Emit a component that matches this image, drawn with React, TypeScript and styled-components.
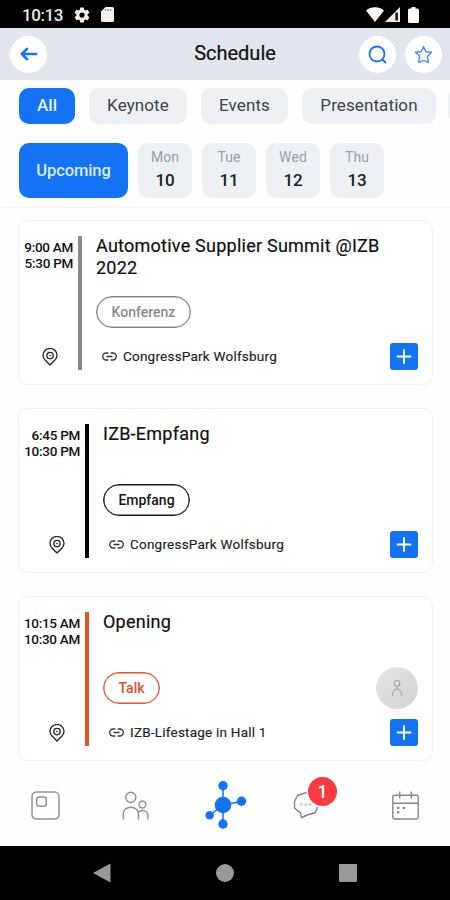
import React from "react";
import styled, { createGlobalStyle } from "styled-components";

const GlobalStyle = createGlobalStyle`
  * { box-sizing: border-box; }
  body { margin: 0; background: #fff; font-family: Roboto, "Liberation Sans", sans-serif; color: #111; }
  svg { display: block; flex: none; }
`;

const BLUE = "#1473f5";

const Screen = styled.div`
  width: 450px;
  height: 900px;
  display: flex;
  flex-direction: column;
  overflow: hidden;
  background: #fefefe;
`;

const StatusBar = styled.div`
  height: 28px;
  flex: none;
  background: #000;
  color: #e8e8e8;
  display: flex;
  align-items: center;
  padding: 1px 31px 0 22px;
`;

const Clock = styled.span`
  font-size: 17px;
  font-weight: 500;
  width: 51px;
  letter-spacing: -0.45px;
  white-space: nowrap;
`;

const StatusGroup = styled.div<{ $end?: boolean; $gap: number }>`
  display: flex;
  align-items: center;
  gap: ${(p) => p.$gap}px;
  margin-left: ${(p) => (p.$end ? "auto" : "0")};
`;

const BatterySlot = styled.div`
  margin-left: 7px;
`;

const Header = styled.header`
  height: 52px;
  flex: none;
  background: #e2e7ef;
  display: flex;
  align-items: center;
  justify-content: space-between;
  padding: 0 8px 0 10px;
`;

const HeaderSide = styled.div<{ $end?: boolean }>`
  width: 84px;
  display: flex;
  gap: 9px;
  justify-content: ${(p) => (p.$end ? "flex-end" : "flex-start")};
`;

const RoundButton = styled.button`
  width: 37px;
  height: 37px;
  flex: none;
  padding: 0;
  border: 0;
  border-radius: 50%;
  background: #fff;
  display: grid;
  place-items: center;
`;

const PageTitle = styled.h1`
  margin: -2px 0 0 18px;
  font-size: 20px;
  font-weight: 400;
  letter-spacing: 0;
  -webkit-text-stroke: 0.2px #111;
`;

const Categories = styled.div`
  display: flex;
  flex: none;
  gap: 14px;
  padding: 8px 0 0 19px;
  overflow: hidden;
`;

const Category = styled.button<{ $w: number; $active?: boolean }>`
  flex: none;
  width: ${(p) => p.$w}px;
  height: 36px;
  padding: 0 0 2px;
  border: 0;
  border-radius: 10px;
  font-family: inherit;
  font-size: 17px;
  letter-spacing: 0.1px;
  font-weight: ${(p) => (p.$active ? 500 : 400)};
  color: ${(p) => (p.$active ? "#e6f0ff" : "#3f4246")};
  background: ${(p) => (p.$active ? BLUE : "#edf1f6")};

  &:last-child {
    margin-left: -2px;
  }
`;

const Days = styled.div`
  display: flex;
  flex: none;
  gap: 10px;
  height: 84px;
  padding: 19px 0 0 19px;
  border-bottom: 1px solid #f3f4f5;
`;

const Upcoming = styled.button`
  width: 109px;
  height: 55px;
  padding: 0;
  border: 0;
  border-radius: 10px;
  background: ${BLUE};
  color: #dceaff;
  font-family: inherit;
  font-size: 16.5px;
  font-weight: 500;
  letter-spacing: -0.1px;
`;

const Day = styled.div`
  width: 54px;
  height: 55px;
  border-radius: 10px;
  background: #edf1f6;
  display: flex;
  flex-direction: column;
  align-items: center;
  padding-top: 5px;
`;

const DayName = styled.span`
  font-size: 14px;
  line-height: 18px;
  letter-spacing: 0.1px;
  color: #9a9fa6;
`;

const DayNumber = styled.span`
  font-size: 17px;
  line-height: 28px;
  font-weight: 500;
  letter-spacing: -0.2px;
  color: #1c1c1e;
`;

const Sessions = styled.main`
  flex: none;
  height: 553px;
  padding: 12px 17px 0 18px;
  display: flex;
  flex-direction: column;
  gap: 23px;
`;

const Card = styled.article`
  height: 165px;
  flex: none;
  border: 1px solid #f0f2f6;
  border-radius: 10px;
  background: #fff;
  display: flex;
  padding: 15px 14px 14px 6px;
`;

const TimeColumn = styled.div`
  display: flex;
  flex-direction: column;
  align-items: flex-end;
  justify-content: space-between;
  padding: 3px 0 4px;
`;

const Times = styled.div<{ $w: number }>`
  width: ${(p) => p.$w}px;
  font-size: 13.5px;
  line-height: 16px;
  font-weight: 500;
  letter-spacing: -0.28px;
  white-space: nowrap;
  display: flex;
  flex-direction: column;
  align-items: flex-end;
`;

const PinSlot = styled.div`
  margin-right: 15px;
`;

const Stripe = styled.div<{ $color: string }>`
  width: 4px;
  margin: 0 14px 0 5px;
  background: ${(p) => p.$color};
`;

const Details = styled.div`
  flex: 1;
  display: flex;
  flex-direction: column;
`;

const SessionTitle = styled.h2`
  margin: -1px 0 1px;
  height: 60px;
  font-size: 18px;
  line-height: 22px;
  font-weight: 400;
  letter-spacing: 0.24px;
  -webkit-text-stroke: 0.2px #111;
`;

const TagRow = styled.div`
  display: flex;
  align-items: center;
  justify-content: space-between;
  height: 32px;
`;

const Tag = styled.span<{ $color: string; $border: string; $w: number }>`
  width: ${(p) => p.$w}px;
  height: 32px;
  border: 1.5px solid ${(p) => p.$border};
  box-shadow: inset 0 0 0 0.5px ${(p) => p.$border};
  border-radius: 16px;
  color: ${(p) => p.$color};
  display: grid;
  place-items: center;
  font-size: 14px;
  font-weight: 500;
`;

const Avatar = styled.div`
  width: 42px;
  height: 42px;
  flex: none;
  border-radius: 50%;
  background: linear-gradient(135deg, #e3e3e3, #d3d3d3);
  display: grid;
  place-items: center;
`;

const PlaceRow = styled.div`
  display: flex;
  align-items: center;
  margin-top: 14px;
  padding-left: 6px;
  height: 28px;
`;

const Place = styled.span`
  margin-left: 6px;
  font-size: 13.5px;
  letter-spacing: 0.22px;
  color: #222;
  -webkit-text-stroke: 0.15px #222;
`;

const AddButton = styled.button`
  margin-left: auto;
  width: 28px;
  height: 27px;
  padding: 0;
  border: 0;
  border-radius: 3px;
  background: ${BLUE};
  display: grid;
  place-items: center;
`;

const BottomNav = styled.nav`
  height: 85px;
  flex: none;
  display: flex;
  align-items: center;
  padding: 3px 0 0 31px;
  background: #fefefe;
`;

const NavItem = styled.div<{ $w: number; $before?: number }>`
  position: relative;
  flex: none;
  width: ${(p) => p.$w}px;
  margin-left: ${(p) => p.$before ?? 0}px;
  display: grid;
  place-items: center;
`;

const Badge = styled.span`
  position: absolute;
  left: 15px;
  top: -14px;
  width: 29px;
  height: 29px;
  border-radius: 50%;
  background: #fb3b40;
  color: #fff;
  display: grid;
  place-items: center;
  font-size: 17.5px;
  font-weight: 500;
`;

const SystemBar = styled.div`
  flex: none;
  height: 54px;
  background: #000;
  display: flex;
  align-items: center;
  justify-content: space-between;
  padding: 0 93px;
`;

const Gear = () => (
  <svg width="18" height="18" viewBox="0 0 24 24" fill="#f2f2f2">
    <path d="M19.43 12.98c.04-.32.07-.64.07-.98s-.03-.66-.07-.98l2.11-1.65a.5.5 0 0 0 .12-.64l-2-3.46a.5.5 0 0 0-.61-.22l-2.49 1a7.3 7.3 0 0 0-1.69-.98l-.38-2.65A.49.49 0 0 0 14 2h-4a.49.49 0 0 0-.49.42l-.38 2.65c-.61.25-1.17.59-1.69.98l-2.49-1a.5.5 0 0 0-.61.22l-2 3.46a.5.5 0 0 0 .12.64l2.11 1.65c-.04.32-.07.65-.07.98s.03.66.07.98l-2.11 1.65a.5.5 0 0 0-.12.64l2 3.46c.12.22.39.3.61.22l2.49-1c.52.4 1.08.73 1.69.98l.38 2.65c.03.24.24.42.49.42h4c.25 0 .46-.18.49-.42l.38-2.65c.61-.25 1.17-.59 1.69-.98l2.49 1c.23.09.49 0 .61-.22l2-3.46a.5.5 0 0 0-.12-.64zM12 15.5a3.5 3.5 0 1 1 0-7 3.5 3.5 0 0 1 0 7z" />
  </svg>
);

const SdCard = () => (
  <svg width="13" height="15" viewBox="0 0 13 15">
    <path d="M4.600 0H11.500a1.500 1.500 0 0 1 1.500 1.500v12a1.500 1.500 0 0 1-1.500 1.500h-10A1.500 1.500 0 0 1 0 13.500V4.600z" fill="#f2f2f2" />
    <path d="M4.800 2v2M7.200 2v2M9.600 2v2" stroke="#888" strokeWidth="1.200" />
  </svg>
);

const Wifi = () => (
  <svg width="18" height="15" viewBox="0 0 18 15">
    <path d="M0 3.500C5-.9 13-.9 18 3.500L9 15z" fill="#fff" />
  </svg>
);

const Signal = () => (
  <svg width="15" height="15" viewBox="0 0 15 15">
    <path d="M15 0V15H0z" fill="#eee" />
    <path d="M10.300 5.500h2.700v8h-2.700z" fill="#222" />
  </svg>
);

const Battery = () => (
  <svg width="11" height="16" viewBox="0 0 11 16">
    <path d="M3.500 0h4v1.600h2A1.500 1.500 0 0 1 11 3.100v11.400A1.500 1.500 0 0 1 9.500 16h-8A1.500 1.500 0 0 1 0 14.500V3.100a1.500 1.500 0 0 1 1.500-1.500h2z" fill="#fff" />
  </svg>
);

const BackArrow = () => (
  <svg width="18" height="14" viewBox="0 0 18 14" fill="none" stroke={BLUE} strokeWidth="2.600" strokeLinecap="round" strokeLinejoin="round">
    <path d="M16.200 7H2M7 1.800L1.800 7L7 12.200" />
  </svg>
);

const Search = () => (
  <svg width="19" height="19" viewBox="0 0 19 19" fill="none" stroke={BLUE} strokeWidth="1.800">
    <circle cx="9" cy="9" r="7.500" />
    <path d="M14 14l4 4" />
  </svg>
);

const Star = () => (
  <svg width="19" height="19" viewBox="0 0 19 19" fill="none" stroke="#4589f2" strokeWidth="1.400" strokeLinejoin="round">
    <path d="M9.500 1.500l2.300 5.200 5.700.6-4.200 3.900 1.100 5.900c-1.800.3-3.200-1.500-4.900-1.500s-3.100 1.800-4.900 1.500l1.100-5.900L1.500 7.300l5.700-.6z" />
  </svg>
);

const Pin = () => (
  <svg width="16" height="18" viewBox="0 0 16 18" fill="none" stroke="#222" strokeWidth="1.300" strokeLinejoin="round">
    <path d="M8 17L3.300 12.300A7 6.800 0 1 1 12.700 12.300z" />
    <circle cx="8" cy="7.600" r="3.200" />
    <circle cx="8" cy="7.600" r="0.500" strokeWidth="1" />
  </svg>
);

const LinkIcon = () => (
  <svg width="15" height="9" viewBox="0 0 15 9" fill="none" stroke="#333" strokeWidth="1.300">
    <path d="M6.300 1H4.200a3.500 3.500 0 0 0 0 7h2.100M8.700 1h2.100a3.500 3.500 0 0 1 0 7H8.700M4.500 4.500h6" />
  </svg>
);

const Plus = () => (
  <svg width="16" height="15" viewBox="0 0 16 15" stroke="#fff" strokeWidth="1.900" strokeLinecap="round">
    <path d="M8 1v13M1.500 7.500h13" />
  </svg>
);

const Person = () => (
  <svg width="12" height="18" viewBox="0 0 12 18" fill="none" stroke="#aaa" strokeWidth="1.200">
    <circle cx="6" cy="4.200" r="2.900" />
    <path d="M6 7.100v2.400M1.500 17v-2.300Q1.500 12 6 9.500Q10.500 12 10.500 14.700V17" />
  </svg>
);

const FeedIcon = () => (
  <svg width="29" height="29" viewBox="0 0 29 29" fill="none" stroke="#8b92a2" strokeWidth="1.500">
    <rect x="1" y="1" width="27" height="27" rx="4.500" />
    <rect x="5.700" y="6" width="9.600" height="9.300" rx="2.500" />
  </svg>
);

const PeopleIcon = () => (
  <svg width="27" height="29" viewBox="0 0 27 29" fill="none" stroke="#8b92a2" strokeWidth="1.500">
    <circle cx="8.800" cy="6.300" r="5.100" />
    <circle cx="20.400" cy="13.500" r="3.400" />
    <path d="M1.200 28.500V23.500C1.200 13.800 16.400 13.800 16.400 23.500V28.500M16.400 21.500C19 17.900 25.800 19.100 25.800 24.500V28.500" />
  </svg>
);

const NetworkIcon = () => (
  <svg width="42" height="50" viewBox="0 0 42 50" fill={BLUE} stroke={BLUE}>
    <path d="M18 5.500v38.500M18 25l18.500-3.500M18 25L5 35" strokeWidth="1.500" />
    <g stroke="none">
      <circle cx="18" cy="25" r="8.300" />
      <circle cx="18" cy="5.700" r="4.700" />
      <circle cx="18" cy="44" r="4.700" />
      <circle cx="36.500" cy="21.300" r="4.700" />
      <circle cx="4.700" cy="35.300" r="4.200" />
    </g>
  </svg>
);

const ChatIcon = () => (
  <svg width="26" height="28" viewBox="0 0 26 28" fill="none" stroke="#7d8492" strokeWidth="1.400" strokeLinejoin="round">
    <path d="M13.500 1.500L4.500 4.500L1.500 10.500L1.500 17L7.500 22L8.500 26.500L14.500 24L22.500 21.500L24.500 16" />
    <g stroke="#b5b9c0" strokeWidth="0.900">
      <circle cx="8.500" cy="13.500" r="1" />
      <circle cx="12.800" cy="13.500" r="1" />
      <circle cx="17.100" cy="13.500" r="1" />
    </g>
  </svg>
);

const CalendarIcon = () => (
  <svg width="27" height="29" viewBox="0 0 27 29" fill="none" stroke="#7f8796" strokeWidth="1.400">
    <rect x="0.800" y="4.300" width="25.400" height="23.700" rx="1.500" />
    <path d="M1 12.300h25M7.700 0.500v7M19.300 0.500v7" />
    <path d="M5 17h2.500M10.500 17H13M5 21.300h2.500" strokeWidth="2" />
  </svg>
);

const CATEGORIES = [
  { label: "All", w: 56, active: true },
  { label: "Keynote", w: 98 },
  { label: "Events", w: 87 },
  { label: "Presentation", w: 134 },
  { label: "", w: 90 },
];

const DAYS: [string, number][] = [["Mon", 10], ["Tue", 11], ["Wed", 12], ["Thu", 13]];

type Session = {
  start: string;
  end: string;
  timeWidth: number;
  title: string;
  tag: string;
  tagWidth: number;
  stripe: string;
  border: string;
  color: string;
  place: string;
  speaker?: boolean;
};

const SESSIONS: Session[] = [
  { start: "9:00 AM", end: "5:30 PM", timeWidth: 48, title: "Automotive Supplier Summit @IZB 2022", tag: "Konferenz", tagWidth: 95, stripe: "#8b8b8b", border: "#858585", color: "#8a8a8a", place: "CongressPark Wolfsburg" },
  { start: "6:45 PM", end: "10:30 PM", timeWidth: 55, title: "IZB-Empfang", tag: "Empfang", tagWidth: 87, stripe: "#000", border: "#1a1a1a", color: "#151515", place: "CongressPark Wolfsburg" },
  { start: "10:15 AM", end: "10:30 AM", timeWidth: 55, title: "Opening", tag: "Talk", tagWidth: 57, stripe: "#e65320", border: "#e65025", color: "#e65025", place: "IZB-Lifestage in Hall 1", speaker: true },
];

const SessionCard = ({ session: s }: { session: Session }) => (
  <Card>
    <TimeColumn>
      <Times $w={s.timeWidth}>
        <span>{s.start}</span>
        <span>{s.end}</span>
      </Times>
      <PinSlot><Pin /></PinSlot>
    </TimeColumn>
    <Stripe $color={s.stripe} />
    <Details>
      <SessionTitle>{s.title}</SessionTitle>
      <TagRow>
        <Tag $color={s.color} $border={s.border} $w={s.tagWidth}>{s.tag}</Tag>
        {s.speaker && <Avatar><Person /></Avatar>}
      </TagRow>
      <PlaceRow>
        <LinkIcon />
        <Place>{s.place}</Place>
        <AddButton><Plus /></AddButton>
      </PlaceRow>
    </Details>
  </Card>
);

export default function App() {
  return (
    <Screen>
      <GlobalStyle />
      <StatusBar>
        <Clock>10:13</Clock>
        <StatusGroup $gap={10}><Gear /><SdCard /></StatusGroup>
        <StatusGroup $end $gap={1}>
          <Wifi />
          <Signal />
          <BatterySlot><Battery /></BatterySlot>
        </StatusGroup>
      </StatusBar>
      <Header>
        <HeaderSide><RoundButton><BackArrow /></RoundButton></HeaderSide>
        <PageTitle>Schedule</PageTitle>
        <HeaderSide $end>
          <RoundButton><Search /></RoundButton>
          <RoundButton><Star /></RoundButton>
        </HeaderSide>
      </Header>
      <Categories>
        {CATEGORIES.map((c, i) => (
          <Category key={i} $w={c.w} $active={c.active}>{c.label}</Category>
        ))}
      </Categories>
      <Days>
        <Upcoming>Upcoming</Upcoming>
        {DAYS.map(([name, n]) => (
          <Day key={name}>
            <DayName>{name}</DayName>
            <DayNumber>{n}</DayNumber>
          </Day>
        ))}
      </Days>
      <Sessions>
        {SESSIONS.map((s) => <SessionCard key={s.title} session={s} />)}
      </Sessions>
      <BottomNav>
        <NavItem $w={29}><FeedIcon /></NavItem>
        <NavItem $w={27} $before={62}><PeopleIcon /></NavItem>
        <NavItem $w={42} $before={55.5}><NetworkIcon /></NavItem>
        <NavItem $w={26} $before={46.5}><ChatIcon /><Badge>1</Badge></NavItem>
        <NavItem $w={27} $before={73}><CalendarIcon /></NavItem>
      </BottomNav>
      <SystemBar>
        <svg width="18" height="20" viewBox="0 0 18 20"><path d="M0 10L17.500 0.500v19z" fill="#999" /></svg>
        <svg width="18" height="18" viewBox="0 0 18 18"><circle cx="9" cy="9" r="9" fill="#999" /></svg>
        <svg width="18" height="18" viewBox="0 0 18 18"><rect width="18" height="18" rx="1" fill="#999" /></svg>
      </SystemBar>
    </Screen>
  );
}
